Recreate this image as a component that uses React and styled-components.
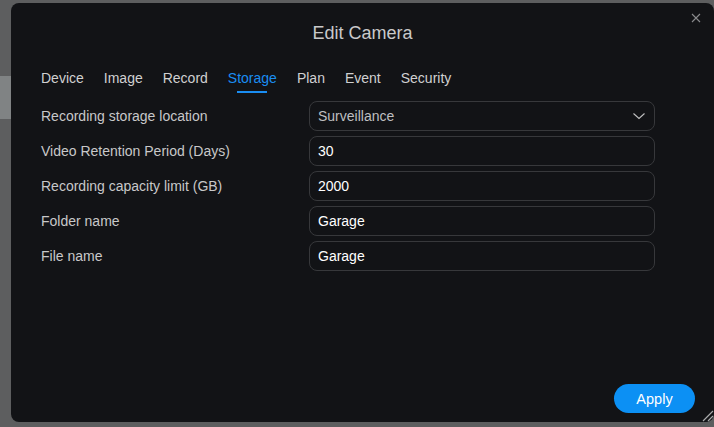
import React from "react";
import styled, { createGlobalStyle } from "styled-components";

const Global = createGlobalStyle`
  html, body { margin: 0; padding: 0; background: #5d5e5f; }
  body { font-family: "Liberation Sans", Arial, sans-serif; }
  * { box-sizing: border-box; }
`;

const Backdrop = styled.div`
  width: 714px;
  height: 427px;
  overflow: hidden;
  display: grid;
  grid-template-columns: 11px 703px;
  padding-top: 3px;
  background: #5d5e5f;
`;

const SideStrip = styled.div`
  margin-top: 73px;
  height: 43px;
  background: #808384;
`;

const Dialog = styled.section`
  position: relative;
  height: 419px;
  background: #121316;
  border-radius: 8px;
  display: flex;
  flex-direction: column;
  padding: 20px 0 9px 30px;
`;

const Title = styled.h2`
  margin: 0;
  padding-right: 30px;
  height: 20px;
  line-height: 20px;
  font-size: 18px;
  font-weight: 400;
  color: #c9c9ca;
  text-align: center;
`;

const CloseButton = styled.button`
  position: absolute;
  top: 10px;
  right: 13px;
  width: 10px;
  height: 10px;
  padding: 0;
  border: 0;
  background: transparent;
  display: flex;
  cursor: pointer;
`;

const Tabs = styled.nav`
  margin-top: 25px;
  display: flex;
  gap: 20px;
`;

const Tab = styled.div`
  display: flex;
  flex-direction: column;
  align-items: center;
  font-size: 14px;
  line-height: 20px;
  color: ${(p) => (p.$active ? "#1a8df2" : "#d0d0d1")};
  &::after {
    content: "";
    margin-top: 3px;
    width: ${(p) => (p.$active ? "30px" : "0")};
    height: 2px;
    background: #1a8df2;
  }
`;

const Form = styled.div`
  margin-top: 8px;
  display: flex;
  flex-direction: column;
  gap: 5px;
`;

const Row = styled.div`
  display: grid;
  grid-template-columns: 268px 346px;
  align-items: center;
  height: 30px;
`;

const Label = styled.span`
  font-size: 14px;
  color: #c8c8c9;
`;

const Field = styled.div`
  height: 30px;
  border: 1px solid #37383b;
  border-radius: 8px;
  display: flex;
  align-items: center;
  justify-content: space-between;
  padding: 0 8px 0 8px;
  font-size: 14px;
  color: ${(p) => (p.$muted ? "#bfbfc0" : "#ffffff")};
`;

const Footer = styled.div`
  margin-top: auto;
  display: flex;
  justify-content: flex-end;
  padding-right: 19px;
`;

const ApplyButton = styled.button`
  width: 81px;
  height: 29px;
  border: 0;
  border-radius: 15px;
  background: #0c90f4;
  color: #ffffff;
  font-family: "Liberation Sans", Arial, sans-serif;
  font-size: 14.5px;
  cursor: pointer;
`;

const ResizeGrip = styled.svg`
  position: absolute;
  right: 0;
  bottom: 0;
`;

const tabs = ["Device", "Image", "Record", "Storage", "Plan", "Event", "Security"];

const fields = [
  { label: "Recording storage location", value: "Surveillance", select: true },
  { label: "Video Retention Period (Days)", value: "30" },
  { label: "Recording capacity limit (GB)", value: "2000" },
  { label: "Folder name", value: "Garage" },
  { label: "File name", value: "Garage" },
];

export default function App() {
  return (
    <>
      <Global />
      <Backdrop>
        <SideStrip />
        <Dialog>
          <Title>Edit Camera</Title>
          <CloseButton aria-label="Close">
            <svg width="10" height="10" viewBox="0 0 10 10">
              <path d="M1 1L9 9M9 1L1 9" stroke="#8a8b8d" strokeWidth="1.1" />
            </svg>
          </CloseButton>
          <Tabs>
            {tabs.map((t) => (
              <Tab key={t} $active={t === "Storage"}>
                {t}
              </Tab>
            ))}
          </Tabs>
          <Form>
            {fields.map((f) => (
              <Row key={f.label}>
                <Label>{f.label}</Label>
                <Field $muted={f.select}>
                  <span>{f.value}</span>
                  {f.select && (
                    <svg width="14" height="8" viewBox="0 0 14 8">
                      <path d="M1.5 1.5L7 6.5L12.5 1.5" fill="none" stroke="#c0c0c1" strokeWidth="1.1" />
                    </svg>
                  )}
                </Field>
              </Row>
            ))}
          </Form>
          <Footer>
            <ApplyButton>Apply</ApplyButton>
          </Footer>
          <ResizeGrip width="16" height="16" viewBox="0 0 16 16">
            <path d="M15 5L5 15M15 10L10 15" stroke="#a9aaab" strokeWidth="1.2" />
          </ResizeGrip>
        </Dialog>
      </Backdrop>
    </>
  );
}
